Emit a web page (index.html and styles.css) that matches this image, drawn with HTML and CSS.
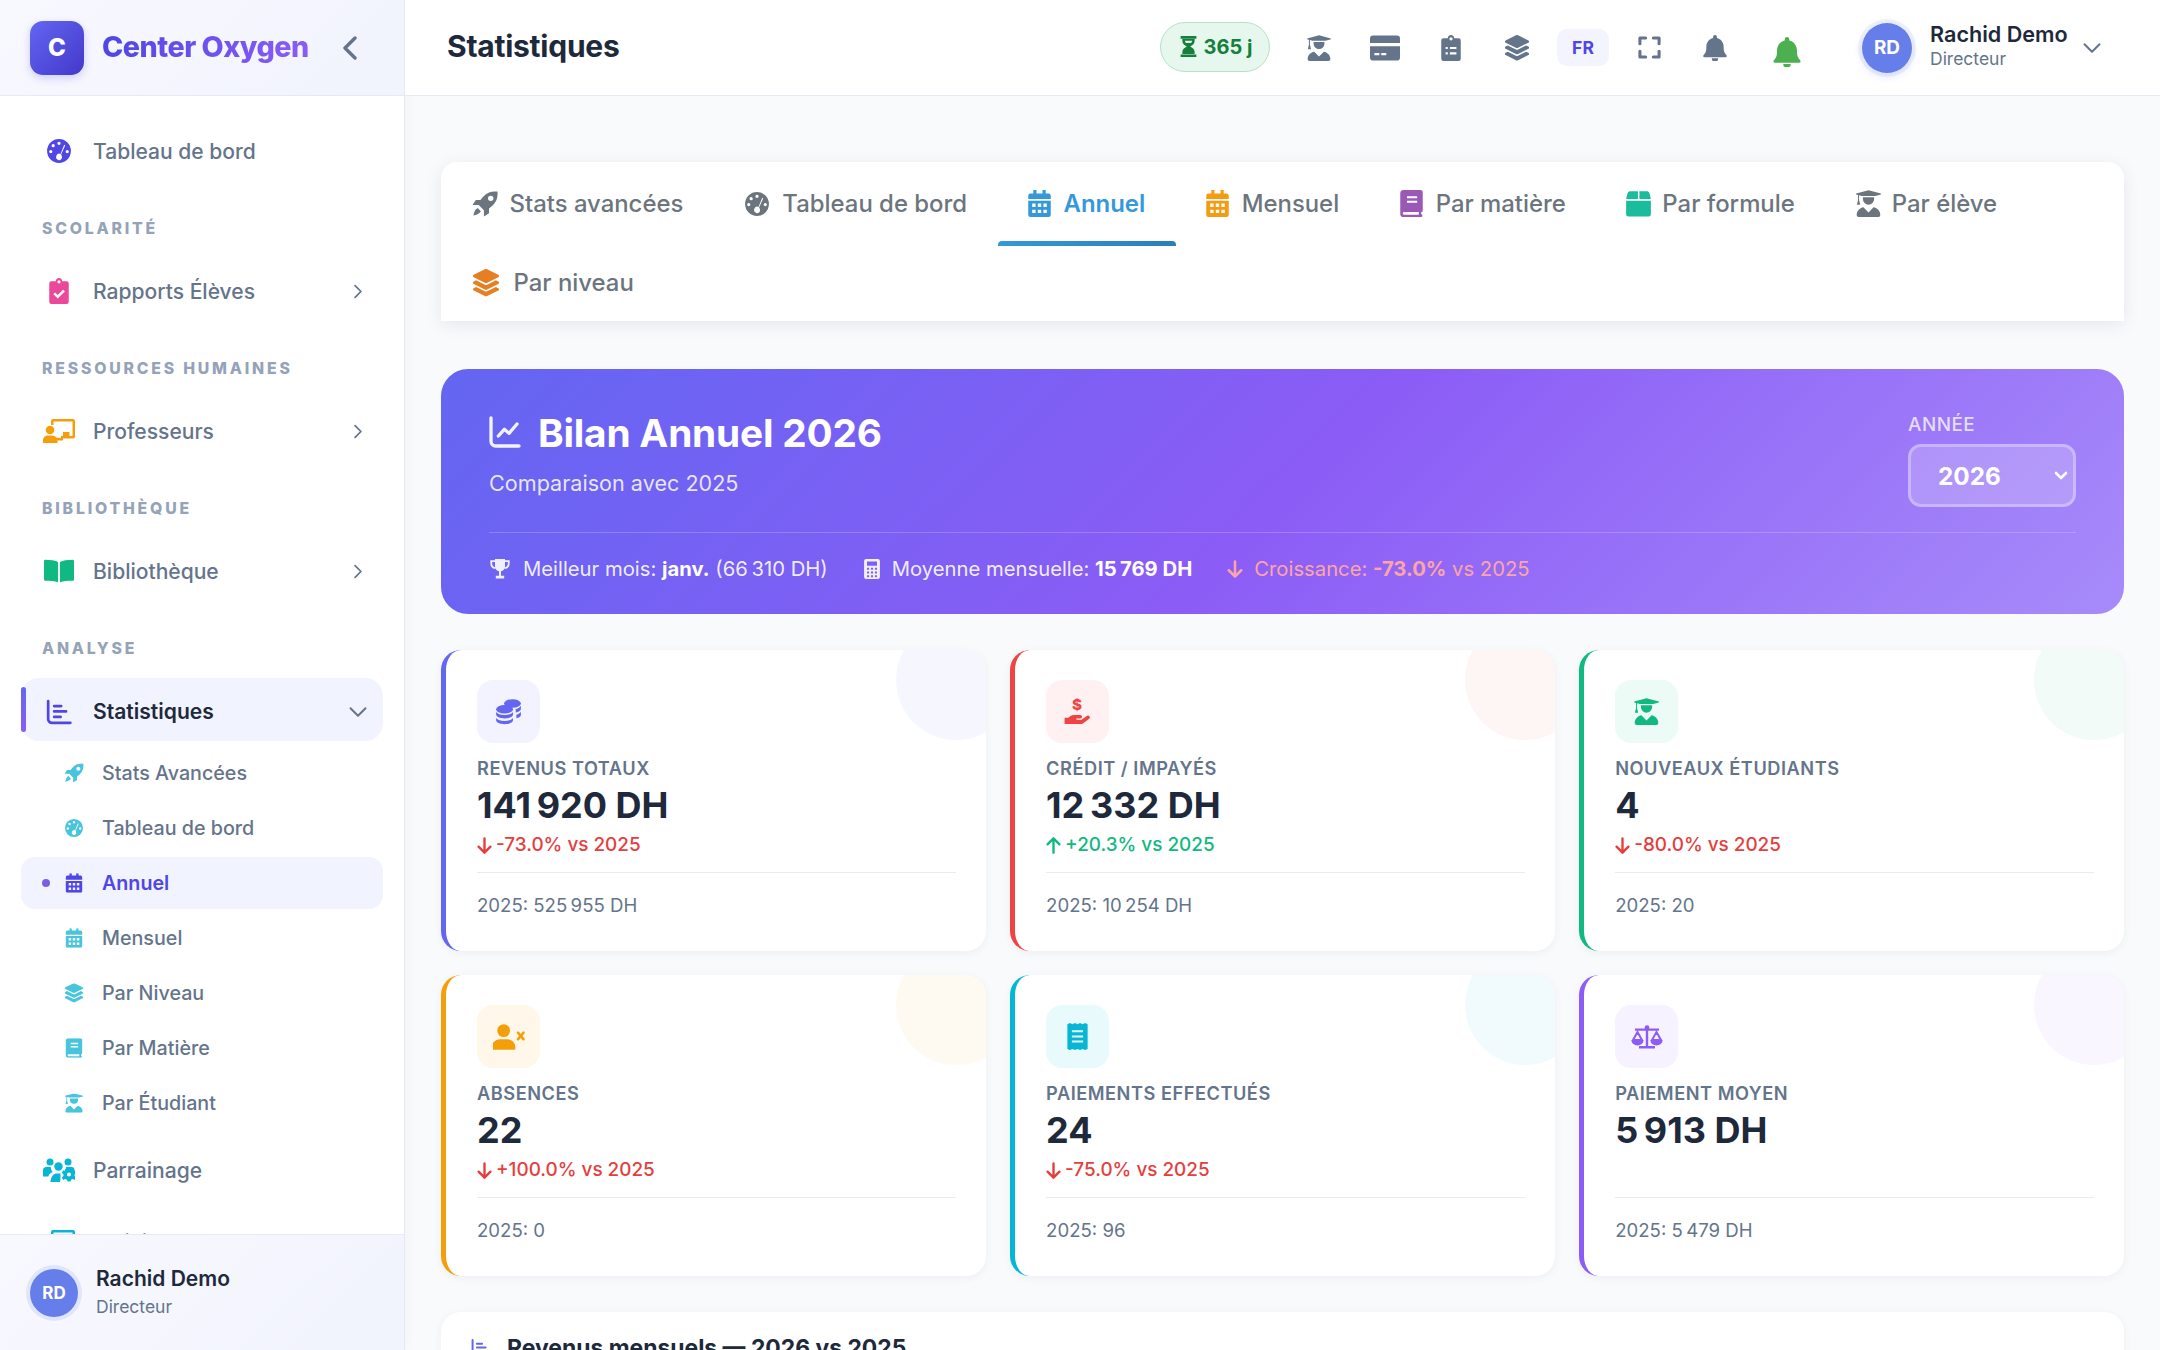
FILE: index.html
```html
<!DOCTYPE html>
<html lang="fr">
<head>
<meta charset="utf-8">
<title>Statistiques</title>
<link rel="stylesheet" href="styles.css">
</head>
<body>
<svg class="defs" aria-hidden="true">
  <symbol id="gauge" viewBox="0 0 24 24"><path fill-rule="evenodd" d="M12 1a11 11 0 1 0 0 22 11 11 0 0 0 0-22zM12 3.400a1.500 1.500 0 1 0 0 3 1.500 1.500 0 0 0 0-3zM6.600 5.600a1.500 1.500 0 1 0 0 3 1.500 1.500 0 0 0 0-3zM4.400 11a1.500 1.500 0 1 0 0 3 1.500 1.500 0 0 0 0-3zM19.600 11a1.500 1.500 0 1 0 0 3 1.500 1.500 0 0 0 0-3zM16.800 6.200l-3.400 8.500a2.600 2.600 0 1 0-2.100 5.600 2.600 2.600 0 0 0 3.300-3.400c0-.7-.3-1.200-.7-1.600l3.800-8.300z"/></symbol>
  <symbol id="rocket" viewBox="0 0 24 24"><path fill-rule="evenodd" d="M23.500.5c-5.500-.6-10 1.100-13.200 4.700L7.800 8.300H3.500L.5 13h5.700l4.800 4.800v5.700l4.700-3v-4.300l3.100-2.500C22.400 10.500 24.100 6 23.500.5zM17.300 9.300a2.500 2.500 0 1 1 0-5 2.500 2.500 0 0 1 0 5z"/><path d="M5.200 15.800c-2.200 1-3.400 4-3.900 6.900 2.900-.5 5.900-1.700 6.900-3.900z"/></symbol>
  <symbol id="calendar" viewBox="0 0 24 24"><path fill-rule="evenodd" d="M6.500 0h2.800v3h5.400V0h2.800v3H20a2 2 0 0 1 2 2v3H2V5a2 2 0 0 1 2-2h2.500zM2 9.500h20V22a2 2 0 0 1-2 2H4a2 2 0 0 1-2-2zM5.500 12v3h3v-3zM10.500 12v3h3v-3zM15.500 12v3h3v-3zM5.500 17.500v3h3v-3zM10.500 17.500v3h3v-3zM15.500 17.500v3h3v-3z"/></symbol>
  <symbol id="book" viewBox="0 0 24 24"><path fill-rule="evenodd" d="M5 0h15a2 2 0 0 1 2 2v16a2 2 0 0 1-1.500 2v1.600a1.200 1.200 0 0 1 0 2.400H5a3 3 0 0 1-3-3V3a3 3 0 0 1 3-3zM8 5.500v1.900h9V5.500zM8 9.500v1.900h9V9.500zM5.500 19.500a1.300 1.300 0 0 0 0 2.600h13v-2.600z"/></symbol>
  <symbol id="box" viewBox="0 0 24 24"><path d="M4 1h7.500V8H1l1.300-5.300A2.300 2.300 0 0 1 4 1zM12.800 1H20a2.300 2.300 0 0 1 1.700 1.700L23 8H12.800zM1 9.500h22V21.500a2 2 0 0 1-2 2H3a2 2 0 0 1-2-2z"/></symbol>
  <symbol id="student" viewBox="1 0 22 24"><path d="M12 .3 23 3.200v.8l-5 1.300H6L3.600 4.700v4.100l1 4.300H1.700l1-4.300V4.400L1 4v-.8zM7 6.500h10v1.500a5 5 0 1 1-10 0zM7.500 15.400 12 19.900l4.500-4.500c3.500.6 6 3.400 6 6.800a1.800 1.800 0 0 1-1.800 1.800H3.300a1.800 1.800 0 0 1-1.800-1.800c0-3.400 2.500-6.200 6-6.800z"/></symbol>
  <symbol id="layers" viewBox="0 0 24 24"><path d="M11 .3a2.200 2.200 0 0 1 2 0l9.500 4.700c.9.500.9 1.700 0 2.100L13 11.800a2.200 2.200 0 0 1-2 0L1.500 7.100c-.9-.4-.9-1.600 0-2.100zM3.500 9.700l7.500 3.700a2.200 2.200 0 0 0 2 0l7.500-3.700 2 1c.9.500.9 1.700 0 2.100L13 17.500a2.200 2.200 0 0 1-2 0l-9.500-4.700c-.9-.4-.9-1.600 0-2.100zM3.500 15.400l7.500 3.700a2.200 2.200 0 0 0 2 0l7.500-3.700 2 1c.9.500.9 1.700 0 2.100L13 23.200a2.200 2.200 0 0 1-2 0l-9.500-4.700c-.9-.4-.9-1.600 0-2.100z"/></symbol>
  <symbol id="clipcheck" viewBox="0 0 24 24"><path fill-rule="evenodd" d="M12 0a3.200 3.200 0 0 1 3 3h4a2 2 0 0 1 2 2v17a2 2 0 0 1-2 2H5a2 2 0 0 1-2-2V5a2 2 0 0 1 2-2h4a3.200 3.200 0 0 1 3-3zM12 2a1.500 1.500 0 1 0 0 3 1.500 1.500 0 0 0 0-3zM6.800 15l1.600-1.600 2.400 2.400 5-5 1.600 1.600-6.600 6.600z"/></symbol>
  <symbol id="cliplist" viewBox="0 0 24 24"><path fill-rule="evenodd" d="M12 0a3.200 3.200 0 0 1 3 3h4a2 2 0 0 1 2 2v17a2 2 0 0 1-2 2H5a2 2 0 0 1-2-2V5a2 2 0 0 1 2-2h4a3.200 3.200 0 0 1 3-3zM12 2a1.500 1.500 0 1 0 0 3 1.500 1.500 0 0 0 0-3zM7 11v2h2v-2zM11 11v2h6v-2zM7 16v2h2v-2zM11 16v2h6v-2z"/></symbol>
  <symbol id="teacher" viewBox="0 0 32 24"><path d="M10 0h20a2 2 0 0 1 2 2v15.500a2 2 0 0 1-2 2H18V17h11.500V2.500h-19V6H8V2a2 2 0 0 1 2-2z"/><path d="M20 13h6.500v4H20z"/><circle cx="7" cy="11" r="4.300"/><path d="M5 16.500h4c2 0 3.300.8 4.500 2.200H20v2.800h-5.500V24H0v-2.300c0-3 2-5.200 5-5.200z"/></symbol>
  <symbol id="bookopen" viewBox="0 0 32 24"><path d="M15 2.500C12 .8 7 0 1.500 0A1.500 1.500 0 0 0 0 1.500V21a1.500 1.500 0 0 0 1.500 1.500c5 0 10 .5 13.500 1.500zM17 2.500C20 .8 25 0 30.500 0A1.500 1.500 0 0 1 32 1.500V21a1.500 1.500 0 0 1-1.500 1.500c-5 0-10 .5-13.500 1.500z"/></symbol>
  <symbol id="bars" viewBox="0 0 24 24"><path fill="none" stroke="currentColor" stroke-width="2.500" stroke-linecap="round" d="M2 2v16.500A3.500 3.500 0 0 0 5.500 22H22.500M7.500 6.500h6.500M7.500 11.500h11M7.500 16.500h6"/></symbol>
  <symbol id="usersgear" viewBox="0 0 32 24"><circle cx="7" cy="4" r="3.500"/><circle cx="25" cy="4" r="3.500"/><circle cx="15.500" cy="8.500" r="4.200"/><path d="M2.500 9h5.300c-.2 2 .8 4 2 5-2.400.8-4 2.500-4.400 4.500H0V12a3 3 0 0 1 2.500-3zM8 22c0-3.800 3-6.500 6-6.500h3.500c-.2 2.800.3 6-.5 8.500H9a1 1 0 0 1-1-2zM23 9h5.500a3 3 0 0 1 3 3v1l-6 1c-2 0-3.500-1-4-1.500.8-1 1.500-2 1.500-3.500z"/><path fill-rule="evenodd" d="M24.500 12.500h3l.5 2 1.800.8 1.900-1.100 1.500 2.600-1.600 1.400v1.800l1.600 1.400-1.500 2.600-1.900-1.100-1.800.8-.5 1.700h-3l-.5-1.700-1.800-.8-1.900 1.100-1.500-2.600 1.600-1.400v-1.800l-1.600-1.400 1.500-2.600 1.900 1.100 1.800-.8zM26 16.500a2 2 0 1 0 0 4 2 2 0 0 0 0-4z" transform="translate(0 -2)"/></symbol>
  <symbol id="coins" viewBox="0 0 24 24"><ellipse cx="15.500" cy="4.800" rx="7.500" ry="3.800"/><path d="M23 6.800v3c0 1.400-1.700 2.600-4.500 3.100l-.2-3.100c2-.3 3.700-1.500 4.700-3zM23 12.200v2.900c0 1.300-1.500 2.400-4 3v-3.200c2-.4 3.200-1.500 4-2.700z"/><ellipse cx="8.500" cy="10" rx="7.500" ry="3.800"/><path d="M1 12.400c1.400 1.700 4 2.700 7.500 2.700s6.100-1 7.500-2.700v2.300c0 2-3.400 3.500-7.500 3.500S1 16.700 1 14.700zM1 17.700c1.400 1.700 4 2.700 7.500 2.700s6.100-1 7.500-2.700v2.100c0 2-3.400 3.500-7.500 3.500S1 21.800 1 19.800z"/></symbol>
  <symbol id="hand" viewBox="0 0 24 24"><text x="11.500" y="10.500" font-family="Inter, sans-serif" font-size="13.500" font-weight="800" text-anchor="middle">$</text><path d="M.5 17.500h3.300l2-1.400c1-.7 2-1.100 3.200-1.100h5.500a1.600 1.600 0 0 1 0 3.200h-3.500v1.200h4.500l5-3.700a1.700 1.700 0 0 1 2 2.700l-5.400 4c-.7.500-1.500.8-2.400.8H.5z"/></symbol>
  <symbol id="userx" viewBox="0 0 30 24"><circle cx="10" cy="6" r="6"/><path d="M6.500 14h7a7.500 7.500 0 0 1 7.500 7.500V23a1 1 0 0 1-1 1H0a1 1 0 0 1-1-1v-1.500A7.500 7.500 0 0 1 6.500 14z"/><path fill="none" stroke="currentColor" stroke-width="2.500" stroke-linecap="round" d="M23.500 8l5 6M28.500 8l-5 6"/></symbol>
  <symbol id="receipt" viewBox="0 0 24 24"><path fill-rule="evenodd" d="M3 1l2.250-1 2.250 1 2.250-1L12 1l2.250-1 2.250 1 2.250-1L21 1v22l-2.250 1-2.250-1-2.250 1L12 23l-2.250 1-2.250-1-2.250 1L3 23zM7 6.500v1.800h10V6.500zM7 11v1.800h10V11zM7 15.500v1.800h10v-1.800z"/></symbol>
  <symbol id="scale" viewBox="0 0 32 24"><path d="M4 3.500h24v2.200H4z"/><circle cx="16" cy="2.500" r="2.300"/><path d="M14.800 3h2.400v18.500h-2.400zM8 21h16v2.500H8z"/><path fill="none" stroke="currentColor" stroke-width="2" d="M6.500 7 2 15h9zM25.500 7 21 15h9z"/><path d="M.5 15.500h12a6 5 0 0 1-12 0zM19.500 15.500h12a6 5 0 0 1-12 0z"/></symbol>
  <symbol id="trophy" viewBox="0 0 24 24"><path d="M6 0h12v9a6 6 0 0 1-12 0zM10.800 14h2.400v6h-2.400zM7 20h10v3.500H7z"/><path fill="none" stroke="currentColor" stroke-width="2.200" d="M6 2.500H1.500V5c0 3 2 5.500 5 6M18 2.500h4.500V5c0 3-2 5.500-5 6"/></symbol>
  <symbol id="calc" viewBox="0 0 24 24"><path fill-rule="evenodd" d="M5 0h14a2.500 2.500 0 0 1 2.500 2.500v19A2.500 2.500 0 0 1 19 24H5a2.500 2.500 0 0 1-2.500-2.500v-19A2.500 2.500 0 0 1 5 0zM6 3v5h12V3zM6 10.500v2.500h2.500v-2.500zM10.700 10.500v2.500h2.600v-2.500zM15.500 10.500v2.500H18v-2.500zM6 15v2.500h2.500V15zM10.700 15v2.500h2.600V15zM15.500 15v2.500H18V15zM6 19.500V22h2.500v-2.500zM10.700 19.500V22h2.600v-2.500zM15.500 19.500V22H18v-2.500z"/></symbol>
  <symbol id="down" viewBox="0 0 24 24"><path fill="none" stroke="currentColor" stroke-width="3" stroke-linecap="round" stroke-linejoin="round" d="M12 3v18M4.500 13.500 12 21l7.500-7.500"/></symbol>
  <symbol id="up" viewBox="0 0 24 24"><path fill="none" stroke="currentColor" stroke-width="3" stroke-linecap="round" stroke-linejoin="round" d="M12 21V3M4.500 10.500 12 3l7.500 7.500"/></symbol>
  <symbol id="chartline" viewBox="0 0 24 24"><path fill="none" stroke="currentColor" stroke-width="2.500" stroke-linecap="round" stroke-linejoin="round" d="M1.500 1.500V19a3.500 3.500 0 0 0 3.500 3.500H22.500M7 15l4.500-5 3.500 3 6-7"/></symbol>
  <symbol id="hourglass" viewBox="0 0 24 24"><path fill-rule="evenodd" d="M3 0h18v3H3zM3 21h18v3H3zM5 3.500h14v2.500c0 3-2.800 4.800-5 6 2.200 1.200 5 3 5 6v2.500H5V18c0-3 2.800-4.800 5-6-2.200-1.200-5-3-5-6zM7.800 5.500c.2.800.5 1.700 1.200 2.500h6c.7-.8 1-1.700 1.200-2.500z"/></symbol>
  <symbol id="card" viewBox="0 0 24 24"><path fill-rule="evenodd" d="M2.500 2h19A2.500 2.500 0 0 1 24 4.500V8H0V4.500A2.500 2.500 0 0 1 2.500 2zM0 10.500h24v9a2.500 2.500 0 0 1-2.500 2.500h-19A2.500 2.500 0 0 1 0 19.500zM3.500 16v1.800h4V16zM9 16v1.800h4V16z"/></symbol>
  <symbol id="expand" viewBox="0 0 24 24"><path fill="none" stroke="currentColor" stroke-width="3.200" stroke-linecap="round" stroke-linejoin="round" d="M2 8V2h6M16 2h6v6M22 16v6h-6M8 22H2v-6"/></symbol>
  <symbol id="bell" viewBox="0 0 24 24"><path d="M12 0a1.800 1.800 0 0 1 1.800 1.800v1C17.600 3.600 20 7 20 11v1.500c0 2.500 1 4.500 2.600 6.200.6.700.2 1.800-.8 1.800H2.200c-1 0-1.400-1.100-.8-1.800C3 17 4 15 4 12.500V11c0-4 2.400-7.400 6.200-8.200v-1A1.800 1.800 0 0 1 12 0zM9 21.500h6a3 3 0 0 1-6 0z"/></symbol>
  <symbol id="cright" viewBox="0 0 24 24"><path fill="none" stroke="currentColor" stroke-width="3" stroke-linecap="round" stroke-linejoin="round" d="M7 2l10 10L7 22"/></symbol>
  <symbol id="cleft" viewBox="0 0 24 24"><path fill="none" stroke="currentColor" stroke-width="3.400" stroke-linecap="round" stroke-linejoin="round" d="M17 2 7 12l10 10"/></symbol>
  <symbol id="cdown" viewBox="0 0 24 24"><path fill="none" stroke="currentColor" stroke-width="2.600" stroke-linecap="round" stroke-linejoin="round" d="M2 7l10 10L22 7"/></symbol>
</svg>

<div class="app">
  <aside class="sidebar">
    <div class="brand">
      <div class="brand-logo">C</div>
      <div class="brand-name">Center Oxygen</div>
      <svg class="brand-toggle"><use href="#cleft"/></svg>
    </div>
    <nav class="nav">
      <a class="item"><span class="ico"><svg class="c-indigo w26"><use href="#gauge"/></svg></span><span class="label">Tableau de bord</span></a>
      <div class="section">SCOLARITÉ</div>
      <a class="item"><span class="ico"><svg class="c-pink w26"><use href="#clipcheck"/></svg></span><span class="label">Rapports Élèves</span><svg class="caret"><use href="#cright"/></svg></a>
      <div class="section">RESSOURCES HUMAINES</div>
      <a class="item"><span class="ico"><svg class="c-amber w32"><use href="#teacher"/></svg></span><span class="label">Professeurs</span><svg class="caret"><use href="#cright"/></svg></a>
      <div class="section">BIBLIOTHÈQUE</div>
      <a class="item"><span class="ico"><svg class="c-green w30"><use href="#bookopen"/></svg></span><span class="label">Bibliothèque</span><svg class="caret"><use href="#cright"/></svg></a>
      <div class="section">ANALYSE</div>
      <a class="item item-open"><span class="ico"><svg class="c-indigo w26"><use href="#bars"/></svg></span><span class="label">Statistiques</span><svg class="caret-down"><use href="#cdown"/></svg></a>
      <div class="sub">
        <a class="sub-item"><svg class="sub-ico"><use href="#rocket"/></svg>Stats Avancées</a>
        <a class="sub-item"><svg class="sub-ico"><use href="#gauge"/></svg>Tableau de bord</a>
        <a class="sub-item sub-active"><svg class="sub-ico"><use href="#calendar"/></svg>Annuel</a>
        <a class="sub-item"><svg class="sub-ico"><use href="#calendar"/></svg>Mensuel</a>
        <a class="sub-item"><svg class="sub-ico"><use href="#layers"/></svg>Par Niveau</a>
        <a class="sub-item"><svg class="sub-ico"><use href="#book"/></svg>Par Matière</a>
        <a class="sub-item"><svg class="sub-ico"><use href="#student"/></svg>Par Étudiant</a>
      </div>
      <a class="item item-after"><span class="ico"><svg class="c-cyan w32"><use href="#usersgear"/></svg></span><span class="label">Parrainage</span></a>
      <a class="item item-last"><span class="ico"><svg class="c-cyan w32"><use href="#teacher"/></svg></span><span class="label">Individuel</span></a>
    </nav>
    <div class="side-user">
      <div class="avatar side-avatar">RD</div>
      <div>
        <div class="side-name">Rachid Demo</div>
        <div class="side-role">Directeur</div>
      </div>
    </div>
  </aside>

  <div class="main">
    <header class="topbar">
      <h1 class="page-title">Statistiques</h1>
      <div class="top-actions">
        <div class="days"><svg class="days-ico"><use href="#hourglass"/></svg>365 j</div>
        <div class="tool-group">
          <span class="tool"><svg><use href="#student"/></svg></span>
          <span class="tool"><svg class="tool-wide"><use href="#card"/></svg></span>
          <span class="tool"><svg><use href="#cliplist"/></svg></span>
          <span class="tool"><svg><use href="#layers"/></svg></span>
          <span class="tool"><span class="lang">FR</span></span>
          <span class="tool"><svg class="tool-small"><use href="#expand"/></svg></span>
          <span class="tool"><svg><use href="#bell"/></svg></span>
          <span class="tool tool-green"><svg><use href="#bell"/></svg></span>
        </div>
        <div class="top-user">
          <div class="avatar top-avatar">RD</div>
          <div class="top-user-text">
            <div class="top-name">Rachid Demo</div>
            <div class="top-role">Directeur</div>
          </div>
          <svg class="top-caret"><use href="#cdown"/></svg>
        </div>
      </div>
    </header>

    <main class="content">
      <div class="tabs">
        <a class="tab"><svg class="tab-ico c-grey"><use href="#rocket"/></svg>Stats avancées</a>
        <a class="tab"><svg class="tab-ico c-grey"><use href="#gauge"/></svg>Tableau de bord</a>
        <a class="tab tab-active"><svg class="tab-ico tab-ico-n"><use href="#calendar"/></svg>Annuel</a>
        <a class="tab"><svg class="tab-ico tab-ico-n c-orange"><use href="#calendar"/></svg>Mensuel</a>
        <a class="tab"><svg class="tab-ico tab-ico-n c-purple"><use href="#book"/></svg>Par matière</a>
        <a class="tab"><svg class="tab-ico tab-ico-n c-teal"><use href="#box"/></svg>Par formule</a>
        <a class="tab"><svg class="tab-ico tab-ico-s c-grey"><use href="#student"/></svg>Par élève</a>
        <a class="tab"><svg class="tab-ico tab-ico-l c-dkorange"><use href="#layers"/></svg>Par niveau</a>
      </div>

      <section class="hero">
        <div class="hero-head">
          <div>
            <h2 class="hero-title"><svg class="hero-ico"><use href="#chartline"/></svg>Bilan Annuel 2026</h2>
            <p class="hero-sub">Comparaison avec 2025</p>
          </div>
          <div class="year">
            <label class="year-label" for="year">ANNÉE</label>
            <select class="year-select" id="year"><option>2026</option><option>2025</option></select>
          </div>
        </div>
        <div class="hero-stats">
          <span class="hero-stat"><svg class="hs-ico"><use href="#trophy"/></svg>Meilleur mois:&nbsp;<b>janv.</b>&nbsp;(66&#8239;310 DH)</span>
          <span class="hero-stat"><svg class="hs-ico hs-calc"><use href="#calc"/></svg>Moyenne mensuelle:&nbsp;<b>15&#8239;769 DH</b></span>
          <span class="hero-stat hero-stat-neg"><svg class="hs-ico hs-arrow"><use href="#down"/></svg>Croissance:&nbsp;<b>-73.0%</b>&nbsp;vs 2025</span>
        </div>
      </section>

      <section class="cards">
        <article class="card t-indigo">
          <div class="card-ico"><svg><use href="#coins"/></svg></div>
          <div class="card-label">REVENUS TOTAUX</div>
          <div class="card-value">141&#8239;920 DH</div>
          <div class="trend neg"><svg><use href="#down"/></svg>-73.0% vs 2025</div>
          <div class="card-foot">2025: 525&#8239;955 DH</div>
        </article>
        <article class="card t-red">
          <div class="card-ico"><svg><use href="#hand"/></svg></div>
          <div class="card-label">CRÉDIT / IMPAYÉS</div>
          <div class="card-value">12&#8239;332 DH</div>
          <div class="trend pos"><svg><use href="#up"/></svg>+20.3% vs 2025</div>
          <div class="card-foot">2025: 10&#8239;254 DH</div>
        </article>
        <article class="card t-green">
          <div class="card-ico"><svg><use href="#student"/></svg></div>
          <div class="card-label">NOUVEAUX ÉTUDIANTS</div>
          <div class="card-value">4</div>
          <div class="trend neg"><svg><use href="#down"/></svg>-80.0% vs 2025</div>
          <div class="card-foot">2025: 20</div>
        </article>
        <article class="card t-amber">
          <div class="card-ico"><svg class="ico-wide"><use href="#userx"/></svg></div>
          <div class="card-label">ABSENCES</div>
          <div class="card-value">22</div>
          <div class="trend neg"><svg><use href="#down"/></svg>+100.0% vs 2025</div>
          <div class="card-foot">2025: 0</div>
        </article>
        <article class="card t-cyan">
          <div class="card-ico"><svg><use href="#receipt"/></svg></div>
          <div class="card-label">PAIEMENTS EFFECTUÉS</div>
          <div class="card-value">24</div>
          <div class="trend neg"><svg><use href="#down"/></svg>-75.0% vs 2025</div>
          <div class="card-foot">2025: 96</div>
        </article>
        <article class="card t-violet">
          <div class="card-ico"><svg class="ico-wide"><use href="#scale"/></svg></div>
          <div class="card-label">PAIEMENT MOYEN</div>
          <div class="card-value">5&#8239;913 DH</div>
          <div class="trend"></div>
          <div class="card-foot">2025: 5&#8239;479 DH</div>
        </article>
      </section>

      <section class="chart-card">
        <h3 class="chart-title"><svg class="chart-ico"><use href="#bars"/></svg>Revenus mensuels — 2026 vs 2025</h3>
      </section>
    </main>
  </div>
</div>
</body>
</html>
```

FILE: styles.css
```css
* { box-sizing: border-box; }
html, body { margin: 0; height: 100%; overflow: hidden; }
body { font-family: Inter, "Liberation Sans", sans-serif; color: #1e293b; background: #f8fafc; }
svg { fill: currentColor; display: block; }
.defs { width: 0; height: 0; position: absolute; }
a { text-decoration: none; color: inherit; }

.app { display: flex; height: 1350px; }

/* Sidebar */
.sidebar { width: 405px; flex: none; display: flex; flex-direction: column; background: #fff; border-right: 1.5px solid #e5e9f2; box-shadow: 2px 0 10px rgba(15, 23, 42, .03); }
.brand { height: 96px; flex: none; display: flex; align-items: center; padding-left: 30px; background: linear-gradient(135deg, #f8f9ff, #f1f3fd); border-bottom: 1.5px solid #e6eaf2; }
.brand-logo { width: 54px; height: 54px; border-radius: 13px; background: linear-gradient(135deg, #6366f1, #4338ca); color: #fff; font-weight: 800; font-size: 24px; display: flex; align-items: center; justify-content: center; box-shadow: 0 3px 8px rgba(79, 70, 229, .25); }
.brand-name { margin: -2px 0 0 18px; font-size: 28.7px; font-weight: 800; letter-spacing: -.5px; background: linear-gradient(90deg, #4f46e5, #8b5cf6); -webkit-background-clip: text; background-clip: text; color: transparent; white-space: nowrap; }
.brand-toggle { width: 24px; height: 24px; margin-left: 29px; color: #64748b; }

.nav { flex: 1; min-height: 0; overflow: hidden; padding: 24px 21px 0; }
.item { height: 62px; display: flex; align-items: center; padding: 0 18px 0 20px; font-size: 21.06px; font-weight: 500; color: #64748b; position: relative; }
.ico { width: 35px; display: flex; justify-content: center; flex: none; margin-right: 17px; }
.label { flex: 1; }
.w26 { width: 26px; height: 26px; }
.w30 { width: 30px; height: 24px; }
.w32 { width: 32px; height: 24px; }
.c-indigo { color: #4f46e5; }
.c-pink { color: #ec4899; }
.c-amber { color: #f59e0b; }
.c-green { color: #10b981; }
.c-cyan { color: #06b6d4; }
.c-grey { color: #6c757d; }
.c-orange { color: #f39c12; }
.c-purple { color: #9b59b6; }
.c-teal { color: #1abc9c; }
.c-dkorange { color: #e67e22; }
.caret { width: 14px; height: 15px; color: #64748b; }
.caret-down { width: 18px; height: 18px; color: #64748b; margin-right: -2px; }
.section { margin: 35px 0 19px 21px; height: 24px; line-height: 24px; font-size: 15.8px; font-weight: 800; letter-spacing: 2.8px; color: #94a3b8; }

.item-open { height: 63px; margin-top: -2px; padding-top: 4px; background: #f1f4ff; border-radius: 18px; color: #1e293b; font-weight: 600; }
.item-open::before { content: ""; position: absolute; left: 0; top: 9px; bottom: 9px; width: 5px; border-radius: 3px; background: linear-gradient(180deg, #6366f1, #8b5cf6); }
.sub { padding-top: 6px; }
.sub-item { height: 52px; margin-bottom: 3px; display: flex; align-items: center; padding-left: 41px; font-size: 19.7px; font-weight: 500; color: #64748b; border-radius: 14px; position: relative; }
.sub-ico { width: 24px; height: 24px; margin-right: 16px; color: #48c5dc; transform: scale(.82); }
.sub-active { background: #f1f3ff; color: #4f46e5; font-weight: 600; }
.sub-active .sub-ico { color: #4f46e5; }
.sub-active::before { content: ""; position: absolute; left: 21px; top: 22px; width: 8px; height: 8px; border-radius: 50%; background: #7c5ce6; }
.item-after { margin-top: 10px; }
.item-last { margin-top: 10px; }

.side-user { flex: none; height: 116px; border-top: 1.5px solid #e6eaf2; background: linear-gradient(135deg, #f8f9ff, #f1f3fd); display: flex; align-items: center; padding-left: 30px; }
.avatar { border-radius: 50%; background: #667eea; color: #fff; font-weight: 700; display: flex; align-items: center; justify-content: center; flex: none; }
.side-avatar { width: 48px; height: 48px; font-size: 17px; box-shadow: 0 0 0 4px rgba(102, 126, 234, .15); margin-right: 18px; }
.side-name { font-size: 21px; font-weight: 600; color: #1e293b; line-height: 28px; }
.side-role { font-size: 17.5px; color: #64748b; line-height: 28px; }

/* Main */
.main { flex: 1; min-width: 0; display: flex; flex-direction: column; height: 1350px; overflow: hidden; }
.topbar { height: 96px; flex: none; background: #fff; border-bottom: 1.5px solid #e6eaf2; display: flex; align-items: center; padding: 0 59px 0 42px; }
.page-title { margin: -4px 0 0; font-size: 30px; font-weight: 700; letter-spacing: -.25px; color: #1e293b; }
.top-actions { margin-left: auto; display: flex; align-items: center; }
.days { width: 110px; height: 50px; margin-top: -2px; border-radius: 25px; background: #e6f7ed; border: 1.5px solid #b5e2c8; color: #15803d; font-size: 20px; font-weight: 700; display: flex; align-items: center; justify-content: center; gap: 5px; margin-right: 24px; }
.days-ico { width: 21px; height: 21px; }
.tool-group { display: flex; align-items: center; gap: 16px; color: #64748b; }
.tool { width: 50px; height: 50px; display: flex; align-items: center; justify-content: center; }
.tool svg { width: 26px; height: 26px; }
.tool .tool-wide { width: 30px; height: 30px; }
.tool .tool-small { width: 23px; height: 23px; }
.tool-green { color: #4caf50; margin-left: 6px; }
.tool-green svg { margin-top: 8px; width: 30px; height: 30px; }
.lang { width: 52px; height: 37px; flex: none; border-radius: 10px; background: #f3f4ff; color: #4f46e5; font-size: 17.5px; font-weight: 700; display: flex; align-items: center; justify-content: center; }
.top-user { display: flex; align-items: center; margin-left: 50px; width: 239px; }
.top-avatar { width: 50px; height: 50px; font-size: 18.9px; box-shadow: 0 0 0 4px rgba(102, 126, 234, .1), 0 3px 10px rgba(102, 126, 234, .2); margin-right: 18px; }
.top-user-text { flex: 1; margin-top: -3px; }
.top-name { font-size: 21.6px; font-weight: 600; color: #1e293b; line-height: 26px; }
.top-role { font-size: 17.5px; color: #64748b; line-height: 24px; }
.top-caret { width: 18px; height: 18px; color: #64748b; }

.content { flex: 1; min-height: 0; padding: 66px 36px 0; overflow: hidden; }

/* Tabs */
.tabs { display: flex; flex-wrap: wrap; background: #fff; border-radius: 16px 16px 0 0; padding-top: 1px; box-shadow: 0 4px 18px rgba(15, 23, 42, .08); margin-bottom: 48px; }
.tab { height: 79px; display: flex; align-items: center; padding: 2px 30.5px 0; font-size: 23.9px; font-weight: 500; color: #6c757d; position: relative; white-space: nowrap; }
.tab-ico { width: 26px; height: 26px; margin-right: 12px; }
.tab-ico-n { width: 27px; height: 27px; margin-left: -2px; margin-right: 10.5px; }
.tab-ico-s { width: 25px; height: 27px; margin-right: 11px; }
.tab-ico-l { width: 28px; height: 28px; margin-right: 14px; }
.tab-active { color: #3498db; font-weight: 600; }
.tab-active::after { content: ""; position: absolute; left: 0; right: 0; bottom: -4px; height: 5px; border-radius: 4px 4px 0 0; background: linear-gradient(90deg, #3498db, #2980b9); }

/* Hero */
.hero { background: linear-gradient(135deg, #6366f1 0%, #8b5cf6 50%, #a78bfa 100%); border-radius: 27px; padding: 37px 48px 30px; color: #fff; margin-bottom: 36px; }
.hero-head { display: flex; justify-content: space-between; align-items: flex-start; padding-bottom: 25px; border-bottom: 1.5px solid rgba(255, 255, 255, .2); }
.hero-title { margin: 0; height: 54px; padding-bottom: 2px; display: flex; align-items: center; font-size: 38.8px; font-weight: 700; letter-spacing: -.2px; }
.hero-ico { width: 32px; height: 32px; margin-right: 17px; color: rgba(255, 255, 255, .92); }
.hero-sub { margin: 8px 0 0; line-height: 30px; font-size: 21.6px; color: rgba(255, 255, 255, .85); }
.year { margin-top: 7px; width: 168px; }
.year-label { display: block; line-height: 24px; font-size: 18.9px; font-weight: 500; letter-spacing: .5px; color: rgba(255, 255, 255, .75); margin-bottom: 7px; }
.year-select { display: block; width: 168px; height: 63px; padding: 0 0 0 27px; border-radius: 13px; border: 3px solid rgba(255, 255, 255, .3); color: #fff; font: 700 24.3px Inter, sans-serif; appearance: none; -webkit-appearance: none; background: rgba(255, 255, 255, .2) url("data:image/svg+xml,%3Csvg xmlns='http://www.w3.org/2000/svg' viewBox='0 0 14 10'%3E%3Cpath fill='none' stroke='%23fff' stroke-width='2.6' stroke-linecap='round' stroke-linejoin='round' d='M2 2l5 5 5-5'/%3E%3C/svg%3E") no-repeat right 5px center / 14px 10px; }
.year-select option { color: #1e293b; }
.hero-stats { display: flex; gap: 36px; margin-top: 21px; line-height: 30px; font-size: 20.25px; color: rgba(255, 255, 255, .9); }
.hero-stat { display: flex; align-items: center; white-space: nowrap; }
.hero-stat b { font-weight: 700; color: #fff; }
.hs-ico { width: 22px; height: 20px; margin-right: 12px; }
.hs-calc { margin-left: -3px; margin-right: 9px; }
.hs-arrow { margin-left: -4px; margin-right: 8px; }
.hero-stat-neg { color: #fca5a5; }
.hero-stat-neg b { color: #fca5a5; }

/* Stat cards */
.cards { display: grid; grid-template-columns: repeat(3, 1fr); gap: 24.3px; }
.card { position: relative; overflow: hidden; height: 301px; background: #fff; border-left: 5.4px solid var(--accent); border-radius: 20px; padding: 30px 30px 0 31px; box-shadow: 0 2px 10px rgba(15, 23, 42, .05); }
.card::before { content: ""; position: absolute; top: -30px; right: -30px; width: 120px; height: 120px; border-radius: 50%; background: var(--accent); opacity: .055; }
.card-ico { width: 63px; height: 63px; border-radius: 16px; background: var(--tint); color: var(--accent); display: flex; align-items: center; justify-content: center; }
.card-ico svg { width: 27px; height: 27px; }
.card-ico .ico-wide { width: 32px; height: 26px; }
.card-label { margin-top: 13px; line-height: 24px; font-size: 18.2px; font-weight: 600; letter-spacing: .53px; color: #64748b; white-space: nowrap; }
.card-value { margin-top: 2px; line-height: 46px; font-size: 36px; font-weight: 700; color: #1e293b; }
.trend { margin-top: 4.5px; height: 24px; margin-bottom: 15px; display: flex; align-items: center; gap: 2px; font-size: 18.9px; font-weight: 500; }
.trend svg { width: 19px; height: 19px; margin: 2px 0 0 -2px; }
.neg { color: #e53e3e; }
.pos { color: #10b981; }
.card-foot { border-top: 1.5px solid #e9ecef; padding-top: 20.5px; line-height: 24px; font-size: 18.6px; color: #64748b; }
.t-indigo { --accent: #6366f1; --tint: #f3f3ff; }
.t-red { --accent: #ef4444; --tint: #fff1f1; }
.t-green { --accent: #10b981; --tint: #edfbf6; }
.t-amber { --accent: #f59e0b; --tint: #fff8ea; }
.t-cyan { --accent: #06b6d4; --tint: #e9fafd; }
.t-violet { --accent: #8b5cf6; --tint: #f6f2ff; }

/* Chart */
.chart-card { margin-top: 36px; height: 200px; background: #fff; border-radius: 20px; padding: 21px 30px; box-shadow: 0 2px 10px rgba(15, 23, 42, .05); }
.chart-title { margin: 0; display: flex; align-items: center; line-height: 30px; font-size: 22.9px; font-weight: 700; color: #1e293b; }
.chart-ico { width: 19px; height: 22px; margin-right: 17px; color: #6366f1; }
```
